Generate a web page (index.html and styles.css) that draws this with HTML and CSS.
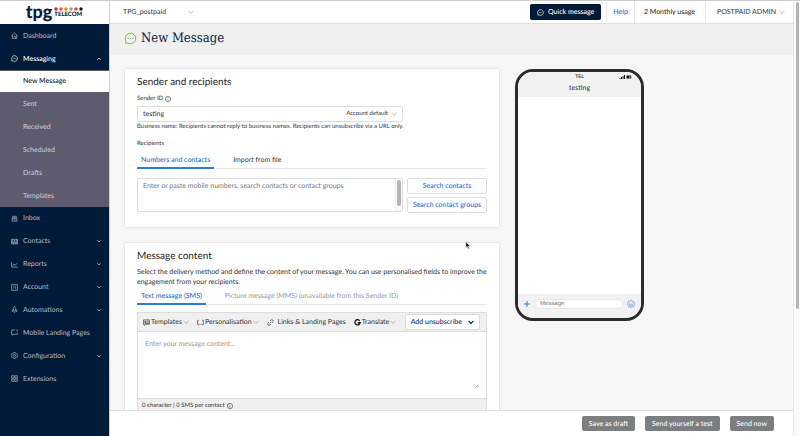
FILE: index.html
```html
<!DOCTYPE html>
<html lang="en">
<head>
    <meta charset="UTF-8">
    <meta name="viewport" content="width=device-width, initial-scale=1.0">
    <title>New Message</title>
    <link rel="stylesheet" href="styles.css">
</head>
<body>

    <!-- shared icons -->
    <svg class="sprite" aria-hidden="true">
        <symbol id="down" viewBox="0 0 10 10"><path d="M1 3l4 4.500 4-4.500"/></symbol>
        <symbol id="up" viewBox="0 0 10 10"><path d="M1 7l4-4 4 4"/></symbol>
        <symbol id="chat" viewBox="0 0 16 16"><path d="M2 14l.35-2.800A6.500 6.500 0 1 1 4.800 13.650z"/><path d="M4.300 8h1.600M7.200 8h1.600M10.100 8h1.600"/></symbol>
        <symbol id="info" viewBox="0 0 16 16"><circle cx="8" cy="8" r="7"/><path d="M8 7v5M8 4v1.500"/></symbol>
    </svg>

    <div class="app">
        <!-- sidebar -->
        <aside class="sidebar">
            <a href="#" class="logo">
                <span class="logo-name">tpg</span>
                <span class="logo-side">
                    <svg class="logo-dots" viewBox="0 0 58 8">
                        <circle cx="4" cy="4" r="3.500" fill="#c8283c"/>
                        <circle cx="14" cy="4" r="3.500" fill="#e0552b"/>
                        <circle cx="24" cy="4" r="3.500" fill="#e58a25"/>
                        <circle cx="34" cy="4" r="3.500" fill="#9b9ca8"/>
                        <circle cx="44" cy="4" r="3.500" fill="#e2402b"/>
                        <circle cx="54" cy="4" r="3.500" fill="#0b1b3a"/>
                    </svg>
                    <span class="logo-sub">TELECOM</span>
                </span>
            </a>

            <nav class="menu">
                <div class="menu-top">
                    <a href="#" class="menu-item">
                        <svg class="icon" viewBox="0 0 16 16"><path d="M1 8.500L8 2l7 6.500M3 7v7.500h10V7M6 11.500a2 2 0 0 1 4 0v3"/></svg>
                        Dashboard
                    </a>
                    <a href="#" class="menu-item open">
                        <svg class="icon"><use href="#chat"/></svg>
                        Messaging
                        <svg class="arrow"><use href="#up"/></svg>
                    </a>
                </div>
                <div class="submenu">
                    <a href="#" class="submenu-item active">New Message</a>
                    <a href="#" class="submenu-item">Sent</a>
                    <a href="#" class="submenu-item">Received</a>
                    <a href="#" class="submenu-item">Scheduled</a>
                    <a href="#" class="submenu-item">Drafts</a>
                    <a href="#" class="submenu-item">Templates</a>
                </div>
                <div class="menu-bottom">
                    <a href="#" class="menu-item">
                        <svg class="icon" viewBox="0 0 16 16"><path d="M2.500 8h11v6h-11zM4 8V3h8v5M6 5.500h4M6 11h4"/></svg>
                        Inbox
                    </a>
                    <a href="#" class="menu-item">
                        <svg class="icon" viewBox="0 0 16 16"><path d="M1 3h14v10.500H1zM5 11.500c0-4 6-4 6 0zM3 3v10M13 3v10"/><circle cx="8" cy="6.500" r="1.500"/></svg>
                        Contacts
                        <svg class="arrow"><use href="#down"/></svg>
                    </a>
                    <a href="#" class="menu-item">
                        <svg class="icon" viewBox="0 0 16 16"><path d="M1.500 2v12H15M4 11l3-4 3 2.500L14 5"/></svg>
                        Reports
                        <svg class="arrow"><use href="#down"/></svg>
                    </a>
                    <a href="#" class="menu-item">
                        <svg class="icon" viewBox="0 0 16 16"><path d="M1.500 1.500h13v13h-13zM5 5h1.500M5 8h1.500M5 11h1.500M8.500 5H11M8.500 8H11M8.500 11H11"/></svg>
                        Account
                        <svg class="arrow"><use href="#down"/></svg>
                    </a>
                    <a href="#" class="menu-item">
                        <svg class="icon" viewBox="0 0 16 16"><path d="M5 11.500V6c0-2 1.500-3.500 3-5 1.500 1.500 3 3 3 5v5.500zM5 8l-2.500 2.500v2L5 11.500M11 8l2.500 2.500v2L11 11.500M7 15h2"/></svg>
                        Automations
                        <svg class="arrow"><use href="#down"/></svg>
                    </a>
                    <a href="#" class="menu-item">
                        <svg class="icon" viewBox="0 0 16 16"><path d="M9 2.500H1.500V12H3v2.500L6 12h8.500V8M12 2.500h2.500V5"/></svg>
                        Mobile Landing Pages
                    </a>
                    <a href="#" class="menu-item">
                        <svg class="icon" viewBox="0 0 16 16"><path d="M6.500 1h3l.6 2 1.900 1 2-.4 1.500 2.600L14 7.700v.8l1.500 1.400-1.500 2.500-2-.4-1.900 1-.6 2h-3l-.6-2-1.900-1-2 .4L.5 9.900 2 8.500v-.8L.5 6.200 2 3.600l2 .4 1.900-1z"/><circle cx="8" cy="8" r="2.500"/></svg>
                        Configuration
                        <svg class="arrow"><use href="#down"/></svg>
                    </a>
                    <a href="#" class="menu-item">
                        <svg class="icon" viewBox="0 0 16 16"><path d="M1.500 1.500H7V7H1.500zM9 1.500h5.500V7H9zM1.500 9H7v5.500H1.500zM9 9h5.500v5.500H9z"/></svg>
                        Extensions
                    </a>
                </div>
            </nav>
        </aside>

        <div class="page">
            <!-- top bar -->
            <header class="topbar">
                <button type="button" class="account-switch">TPG_postpaid <svg class="chevron"><use href="#down"/></svg></button>
                <div class="topbar-right">
                    <button type="button" class="quick-message"><svg class="icon"><use href="#chat"/></svg>Quick message</button>
                    <a href="#" class="help">Help</a>
                    <span class="usage">2 Monthly usage</span>
                    <button type="button" class="user">POSTPAID ADMIN <svg class="chevron"><use href="#down"/></svg></button>
                </div>
            </header>

            <div class="title-bar">
                <svg class="title-icon"><use href="#chat"/></svg>
                <h1>New Message</h1>
            </div>

            <main class="content">
                <div class="forms">
                    <!-- sender and recipients -->
                    <section class="card">
                        <h2>Sender and recipients</h2>
                        <label class="field-label" for="sender">Sender ID <svg class="info"><use href="#info"/></svg></label>
                        <div class="sender-box">
                            <select id="sender">
                                <option>testing</option>
                            </select>
                            <span>Account default</span>
                            <svg class="chevron"><use href="#down"/></svg>
                        </div>
                        <p class="hint">Business name: Recipients cannot reply to business names. Recipients can unsubscribe via a URL only.</p>

                        <label class="field-label recipients-label" for="recipients">Recipients</label>
                        <div class="tabs">
                            <button type="button" class="tab active">Numbers and contacts</button>
                            <button type="button" class="tab">Import from file</button>
                        </div>
                        <div class="recipients-row">
                            <div class="recipients-box">
                                <textarea id="recipients" placeholder="Enter or paste mobile numbers, search contacts or contact groups"></textarea>
                                <span class="box-scroll"></span>
                            </div>
                            <div class="search-buttons">
                                <button type="button">Search contacts</button>
                                <button type="button">Search contact groups</button>
                            </div>
                        </div>
                    </section>

                    <!-- message content -->
                    <section class="card">
                        <h2>Message content</h2>
                        <p class="description">Select the delivery method and define the content of your message. You can use personalised fields to improve the engagement from your recipients.</p>
                        <div class="tabs message-tabs">
                            <button type="button" class="tab active">Text message (SMS)</button>
                            <button type="button" class="tab" disabled>Picture message (MMS) (unavailable from this Sender ID)</button>
                        </div>
                        <div class="editor">
                            <div class="toolbar">
                                <button type="button" class="tool">
                                    <svg class="icon" viewBox="0 0 16 16"><path d="M1 2h14v10H6l-3 3v-3H1zM4 5h3v3H4zM9.500 5H13M9.500 7.500H13M4 10h9"/></svg>
                                    Templates
                                    <svg class="chevron"><use href="#down"/></svg>
                                </button>
                                <button type="button" class="tool">
                                    <svg class="icon" viewBox="0 0 16 16"><path d="M4 3H1.500v10H4M12 3h2.500v10H12M4.500 12h1.500M7.300 12h1.500M10 12h1.500"/></svg>
                                    Personalisation
                                    <svg class="chevron"><use href="#down"/></svg>
                                </button>
                                <button type="button" class="tool links">
                                    <svg class="icon" viewBox="0 0 16 16"><path d="M6 10l4-4M7 4.500l2-2a3 3 0 0 1 4.500 4.500l-2 2M9 11.500l-2 2A3 3 0 0 1 2.500 9l2-2"/></svg>
                                    Links &amp; Landing Pages
                                </button>
                                <button type="button" class="tool">
                                    <svg class="icon google" viewBox="0 0 16 16"><path d="M13 4a6 6 0 1 0 1 4.500H8.500"/></svg>
                                    Translate
                                    <svg class="chevron"><use href="#down"/></svg>
                                </button>
                                <button type="button" class="unsubscribe">Add unsubscribe <svg class="chevron"><use href="#down"/></svg></button>
                            </div>
                            <div class="message-box">
                                <textarea aria-label="Message content" placeholder="Enter your message content..."></textarea>
                                <svg class="grip" viewBox="0 0 8 8"><path d="M1 7l6-6M4.500 7L7 4.500"/></svg>
                            </div>
                            <div class="counter">0 character | 0 SMS per contact <svg class="info"><use href="#info"/></svg></div>
                        </div>
                    </section>
                </div>

                <!-- phone preview -->
                <div class="phone">
                    <div class="phone-top">
                        <div class="phone-status">
                            <span>TEL</span>
                            <svg class="signal" viewBox="0 0 26 8"><path d="M1 6h2v2H1zM4 4h2v4H4zM7 2h2v6H7zM10 0h2v8h-2zM15 1h9v6h-9zM25 3h1v2h-1z"/><path d="M20 3h3v2h-3z" fill="#fff"/></svg>
                        </div>
                        <span class="phone-name">testing</span>
                    </div>
                    <div class="phone-screen"></div>
                    <div class="phone-bottom">
                        <svg class="phone-icon" viewBox="0 0 8 8"><path d="M4 1v6M1 4h6"/></svg>
                        <input type="text" aria-label="Message" placeholder="Message">
                        <svg class="phone-icon" viewBox="0 0 16 16"><circle cx="8" cy="8" r="7"/><path d="M4 6h2.500M9.500 6H12M4 9.500c1.500 3.500 6.500 3.500 8 0z"/></svg>
                    </div>
                </div>
            </main>

            <footer class="actions">
                <button type="button">Save as draft</button>
                <button type="button">Send yourself a test</button>
                <button type="button">Send now</button>
            </footer>
        </div>

        <div class="page-scroll"><span></span></div>
    </div>

    <svg class="cursor" viewBox="0 0 10 16"><path d="M1 1v11l2.500-2.300L5.300 14l2-.8L5.600 9.200H9z"/></svg>

</body>
</html>
```
FILE: styles.css
```css
* {
    box-sizing: border-box;
}

body {
    margin: 0;
    font-family: Lato, "Liberation Sans", sans-serif;
    font-size: 7px;
    line-height: 10px;
    text-rendering: geometricPrecision;
    color: #333;
    background-color: #f7f7f7;
}

button,
input,
select,
textarea {
    font: inherit;
    text-rendering: inherit;
    color: inherit;
    margin: 0;
    padding: 0;
    border: none;
    background: none;
}

button {
    display: flex;
    align-items: center;
    justify-content: center;
    white-space: nowrap;
    cursor: pointer;
}

a {
    color: inherit;
    text-decoration: none;
}

h1,
h2,
p {
    margin: 0;
}

svg {
    display: block;
    flex: none;
    fill: none;
    stroke: currentColor;
}

.sprite {
    position: absolute;
    width: 0;
    height: 0;
}

.icon {
    width: 7px;
    height: 7px;
    stroke-width: 1.5;
}

.chevron {
    width: 6px;
    height: 6px;
    color: #999;
}

.info {
    width: 6px;
    height: 6px;
    stroke-width: 1.5;
}

.app {
    display: flex;
    height: 100vh;
    border-top: 1px solid #ccc;
}

/* sidebar */
.sidebar {
    flex: none;
    display: flex;
    flex-direction: column;
    width: 110px;
    background-color: #001a38;
    border-right: 1px solid #ccd0d6;
}

.logo {
    display: flex;
    justify-content: center;
    gap: 2px;
    height: 23px;
    background-color: #fff;
    color: #0b1b3a;
}

.logo-name {
    font-size: 18px;
    line-height: 20px;
    font-weight: 900;
}

.logo-side {
    padding-top: 6px;
}

.logo-dots {
    width: 29px;
    height: 4px;
    stroke: none;
}

.logo-sub {
    display: block;
    font-size: 6px;
    line-height: 7px;
    font-weight: 900;
}

.menu {
    color: #b4bdc9;
}

.menu-top,
.submenu,
.menu-bottom {
    display: grid;
    grid-auto-rows: 1fr;
}

.menu-top {
    height: 46px;
}

.submenu {
    height: 137px;
    background-color: #5f5b6e;
    color: #d0ced6;
}

.menu-bottom {
    height: 183px;
}

.menu-item {
    display: flex;
    align-items: center;
    gap: 5px;
    padding: 0 8px 0 11px;
}

.menu-item.open {
    color: #fff;
    font-weight: 500;
}

.arrow {
    width: 4px;
    height: 4px;
    margin-left: auto;
    stroke-width: 2;
}

.submenu-item {
    display: flex;
    align-items: center;
    padding-left: 23px;
}

.submenu-item.active {
    margin: 1px 0;
    background-color: #fff;
    color: #001a38;
    font-weight: 500;
}

/* page */
.page {
    flex: 1;
    min-width: 0;
    display: flex;
    flex-direction: column;
}

.topbar {
    flex: none;
    display: flex;
    justify-content: space-between;
    height: 23px;
    padding-left: 13px;
    background-color: #fff;
    border-bottom: 1px solid #e0e0e0;
}

.account-switch {
    gap: 22px;
}

.topbar-right {
    display: flex;
    align-items: stretch;
}

.quick-message {
    gap: 4px;
    height: 16px;
    margin: 3px 5px 0 0;
    padding: 0 7px;
    border-radius: 2px;
    background-color: #001a38;
    color: #fff;
    font-weight: 500;
}

.help,
.usage,
.user {
    display: flex;
    align-items: center;
    border-left: 1px solid #e8e8e8;
}

.help {
    padding: 0 6px;
    color: #1b6fd6;
    font-weight: 500;
}

.usage {
    padding: 0 10px 0 9px;
    color: #222;
}

.user {
    gap: 3px;
    padding: 0 8px 0 11px;
}

.title-bar {
    flex: none;
    display: flex;
    align-items: center;
    gap: 4px;
    height: 30px;
    padding-left: 14px;
    background-color: #f0f0f0;
    border-bottom: 1px solid #e8e8e8;
}

.title-icon {
    width: 13px;
    height: 13px;
    color: #6fa540;
}

h1 {
    font-family: "Roboto Slab", "DejaVu Serif Condensed", "DejaVu Serif", serif;
    font-size: 13px;
    line-height: 18px;
    font-weight: 500;
    color: #0b2343;
}

.content {
    flex: 1;
    min-height: 0;
    display: flex;
    align-items: flex-start;
    gap: 16px;
    padding: 15px;
    overflow-y: auto;
    scrollbar-width: none;
}

.forms {
    flex: 0 1 374px;
    min-width: 0;
    display: grid;
    grid-template-columns: minmax(0, 1fr);
    gap: 16px;
}

.card {
    padding: 7px 12px 14px;
    background-color: #fff;
    border-radius: 2px;
    box-shadow: 0 0 3px rgba(0, 0, 0, 0.2);
}

h2 {
    font-size: 10px;
    line-height: 12px;
    font-weight: normal;
    color: #222;
}

/* sender */
.field-label {
    display: flex;
    align-items: center;
    gap: 2px;
    margin-top: 6px;
    font-size: 6px;
}

.sender-box {
    display: flex;
    align-items: center;
    gap: 3px;
    width: 76%;
    height: 16px;
    margin-top: 2px;
    padding: 0 5px;
    border: 1px solid #ddd;
    border-radius: 2px;
    font-size: 6px;
}

.sender-box select {
    flex: 1;
    appearance: none;
    font-size: 7px;
}

.hint {
    font-size: 6px;
}

.recipients-label {
    margin-top: 7px;
}

.tabs {
    display: flex;
    gap: 15px;
    height: 20px;
    border-bottom: 1px solid #e8e8e8;
}

.tab {
    margin-bottom: -1px;
    padding: 3px 4px 0;
    border-bottom: 2px solid transparent;
}

.tab.active {
    border-bottom-color: #2b7de0;
    color: #1b6fd6;
    font-weight: 500;
}

.tab:disabled {
    color: #999;
}

.recipients-row {
    display: flex;
    gap: 4px;
    margin-top: 9px;
}

.recipients-box {
    flex: 1;
    display: flex;
    height: 34px;
    border: 1px solid #ddd;
    border-radius: 2px;
}

textarea {
    flex: 1;
    min-width: 0;
    resize: none;
    overflow: hidden;
    outline: none;
}

.recipients-box textarea {
    padding: 2px 5px;
}

::placeholder {
    color: #777;
    opacity: 1;
}

.box-scroll {
    width: 7px;
    padding: 1px;
    border-left: 1px solid #eee;
    background-color: #fafafa;
}

.box-scroll::before {
    content: "";
    display: block;
    width: 4px;
    height: 26px;
    border-radius: 2px;
    background-color: #b5b5b5;
}

.search-buttons {
    display: grid;
    gap: 3px;
    width: 80px;
}

.search-buttons button {
    height: 16px;
    border: 1px solid #ddd;
    border-radius: 2px;
    color: #1b6fd6;
    font-weight: 500;
}

/* message */
.description {
    margin-top: 5px;
}

.message-tabs {
    height: 18px;
}

.message-tabs .tab {
    padding-top: 2px;
}

.editor {
    margin-top: 7px;
    border: 1px solid #ddd;
}

.toolbar {
    display: flex;
    align-items: center;
    gap: 8px;
    height: 19px;
    padding: 0 6px 0 5px;
    background-color: #f0f0f0;
    border-bottom: 1px solid #ddd;
}

.tool {
    gap: 1px;
}

.tool.links {
    gap: 4px;
}

.icon.google {
    stroke: #111;
    stroke-width: 3;
}

.unsubscribe {
    gap: 6px;
    height: 16px;
    margin-left: auto;
    padding: 0 5px;
    border: 1px solid #ddd;
    border-radius: 2px;
    background-color: #fff;
    color: #0b2f5c;
    font-weight: 500;
}

.unsubscribe .chevron {
    color: #0b2f5c;
    stroke-width: 2;
}

.message-box {
    display: flex;
    align-items: flex-end;
    height: 66px;
    padding: 7px;
}

.message-box textarea {
    align-self: stretch;
}

.message-box ::placeholder {
    color: #999;
}

.grip {
    width: 4px;
    height: 4px;
    margin-bottom: 3px;
    color: #666;
}

.counter {
    display: flex;
    align-items: center;
    gap: 2px;
    height: 15px;
    padding-left: 4px;
    background-color: #f0f0f0;
    border-top: 1px solid #ddd;
    font-size: 6px;
}

/* phone */
.phone {
    flex: none;
    display: flex;
    flex-direction: column;
    width: 129px;
    height: 252px;
    border: 3px solid #2a2c2e;
    border-radius: 18px;
    background-color: #fff;
    overflow: hidden;
}

.phone-top {
    height: 25px;
    background-color: #f2f2f2;
    text-align: center;
}

.phone-status {
    display: grid;
    grid-template-columns: 1fr auto 1fr;
    font-size: 5px;
    line-height: 10px;
    font-weight: bold;
}

.phone-status span {
    grid-column: 2;
}

.signal {
    justify-self: end;
    align-self: center;
    width: 13px;
    height: 4px;
    margin-right: 9px;
    fill: #111;
    stroke: none;
}

.phone-name {
    display: block;
    line-height: 12px;
}

.phone-screen {
    flex: 1;
}

.phone-bottom {
    display: flex;
    align-items: flex-start;
    gap: 4px;
    height: 24px;
    padding: 5px 6px 0 5px;
    background-color: #f2f2f2;
    color: #2b7de0;
}

.phone-bottom input {
    flex: 1;
    min-width: 0;
    height: 10px;
    padding: 0 4px;
    border: 1px solid #e8e8e8;
    border-radius: 5px;
    background-color: #fff;
    font-family: "Liberation Sans", Arial, sans-serif;
    font-size: 6px;
}

.phone-icon {
    width: 8px;
    height: 8px;
    margin-top: 1px;
}

/* footer */
.actions {
    flex: none;
    display: flex;
    align-items: center;
    justify-content: flex-end;
    gap: 10px;
    height: 26px;
    padding-right: 19px;
    background-color: #fff;
    border-top: 1px solid #e0e0e0;
}

.actions button {
    height: 15px;
    padding: 0 7px;
    border-radius: 2px;
    background-color: #7c7e80;
    color: #fff;
    font-weight: 500;
}

.page-scroll {
    flex: none;
    width: 7px;
    padding: 1px 2px;
    border-left: 1px solid #e8e8e8;
    background-color: #fafafa;
}

.page-scroll span {
    display: block;
    width: 3px;
    height: 71%;
    border-radius: 2px;
    background-color: #b5b5b5;
}

.cursor {
    position: absolute;
    top: 241px;
    left: 465px;
    width: 6px;
    height: 9px;
    fill: #111;
    stroke: #fff;
}
```
